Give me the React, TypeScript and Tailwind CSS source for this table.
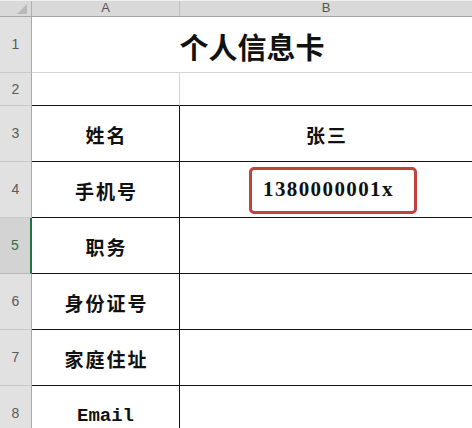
import React from 'react';

const cjk = "font-['Noto_Sans_CJK_SC','Noto_Sans',sans-serif]";

const rows = [
  { n: 3, label: '姓名', value: '张三' },
  { n: 4, label: '手机号', value: '1380000001x', boxed: true },
  { n: 5, label: '职务', selected: true },
  { n: 6, label: '身份证号' },
  { n: 7, label: '家庭住址' },
  { n: 8, label: 'Email', latin: true },
];

const RowHead: React.FC<{ n: number; selected?: boolean; className?: string }> = ({ n, selected, className }) => (
  <div
    className={`w-[32px] shrink-0 flex items-center justify-center text-[14px] border-b ${
      selected
        ? 'bg-[#d3d3d3] text-[#2f6f45] border-r-2 border-r-[#217346] border-b-[#b8b8b8]'
        : 'bg-[#e1e1e1] text-[#5a5a5a] border-r border-r-[#a9a9a9] border-b-[#c9c9c9]'
    } ${className ?? ''}`}
  >
    {n}
  </div>
);

export default function App() {
  return (
    <div className="w-[472px] h-[428px] overflow-hidden bg-white font-['Liberation_Sans',sans-serif]">
      {/* column header */}
      <div className="flex h-[17px] bg-[#d9d9d9] border-t border-[#efefef] border-b border-b-[#a6a6a6] text-[13px] leading-[14px] text-[#555]">
        <div className="w-[32px] shrink-0 relative border-r border-[#b0b0b0]">
          <svg width="10" height="10" viewBox="0 0 10 10" className="absolute left-[17px] top-[3px]">
            <polygon points="10,0 10,10 0,10" fill="#b9b9b9" />
          </svg>
        </div>
        <div className="w-[148px] shrink-0 text-center border-r border-[#c2c2c2]">A</div>
        <div className="flex-1 text-center">B</div>
      </div>

      {/* row 1 - merged title */}
      <div className="flex h-[56px]">
        <RowHead n={1} />
        <div className={`flex-1 flex items-center justify-center border-b border-[#d4d4d4] text-[29px] font-bold text-[#111] pt-[5px] ${cjk}`}>
          个人信息卡
        </div>
      </div>

      {/* row 2 */}
      <div className="flex h-[33px]">
        <RowHead n={2} />
        <div className="w-[148px] shrink-0 border-r border-[#d4d4d4] border-b border-b-[#111]" />
        <div className="flex-1 border-b border-[#111]" />
      </div>

      {rows.map((r) => (
        <div key={r.n} className="flex h-[56px]">
          <RowHead n={r.n} selected={r.selected} />
          <div
            className={`w-[148px] shrink-0 flex items-center justify-center border-r border-b border-[#111] text-[#111] font-bold pt-[3px] ${
              r.latin ? "font-['Liberation_Mono',monospace] text-[19px] pt-[6px]" : `${cjk} text-[19px] tracking-[2px] pl-[2px]`
            }`}
          >
            {r.label}
          </div>
          <div className="flex-1 flex items-center border-b border-[#111]">
            {r.boxed ? (
              <div className="ml-[69px] w-[168px] h-[47px] mt-[1px] flex items-center pl-[11px] border-[3px] border-[#c0433f] rounded-[5px] font-['Liberation_Serif',serif] font-bold text-[21px] tracking-[1.4px] text-[#111]">
                {r.value}
              </div>
            ) : (
              <div className={`w-full text-center font-bold text-[19px] tracking-[2px] pl-[2px] pt-[3px] text-[#111] ${cjk}`}>
                {r.value}
              </div>
            )}
          </div>
        </div>
      ))}
    </div>
  );
}
